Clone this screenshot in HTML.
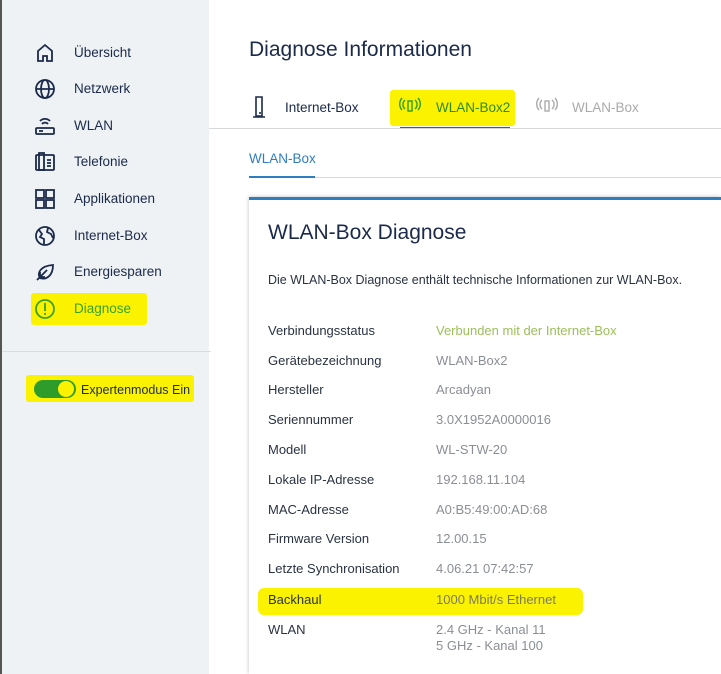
<!DOCTYPE html>
<html style="overflow:hidden;width:721px;height:674px"><head><meta charset="utf-8"><style>
*{margin:0;padding:0;box-sizing:border-box}
body{width:721px;height:674px;overflow:hidden;background:#fff;font-family:"Liberation Sans",sans-serif;position:relative;color:#1b2a4a}
.side{position:absolute;left:0;top:0;width:209px;height:674px;background:#eef2f5;border-left:2px solid #555}
.item{position:absolute;left:72px;font-size:13.5px;color:#1b2a4a}
.ic{position:absolute;left:32px;width:22px;height:22px}
.hl{position:absolute;background:#fbf200;border-radius:3px}
.t{position:absolute;font-size:13px}
.l{left:268px;color:#2a3242}
.v{left:436px;color:#8a8f96}
</style></head><body>
<div class="side">
<div class="hl" style="left:29px;top:293px;width:116px;height:32px"></div>
<div class="hl" style="left:24px;top:375px;width:168px;height:27px"></div>
<svg class="ic" style="top:42px" viewBox="0 0 22 22" fill="none" stroke="#1b2a4a" stroke-width="1.8"><path d="M4 19V9l7-6 7 6v10h-5v-5h-4v5z"/></svg>
<div class="item" style="top:45px">Übersicht</div>
<svg class="ic" style="top:78px" viewBox="0 0 22 22" fill="none" stroke="#1b2a4a" stroke-width="1.8"><circle cx="11" cy="11" r="9"/><ellipse cx="11" cy="11" rx="4" ry="9"/><path d="M2 11h18"/></svg>
<div class="item" style="top:81px">Netzwerk</div>
<svg class="ic" style="top:115px" viewBox="0 0 22 22" fill="none" stroke="#1b2a4a" stroke-width="1.8"><path d="M6 6a7 7 0 0 1 10 0M8 9a4 4 0 0 1 6 0"/><rect x="2" y="13" width="18" height="6" rx="1"/><path d="M5 16h4"/></svg>
<div class="item" style="top:118px">WLAN</div>
<svg class="ic" style="top:151px" viewBox="0 0 22 22" fill="none" stroke="#1b2a4a" stroke-width="1.8"><rect x="2" y="4" width="18" height="15" rx="1"/><rect x="5" y="2" width="5" height="17"/><path d="M13 9h4M13 12h4M13 15h4"/></svg>
<div class="item" style="top:154px">Telefonie</div>
<svg class="ic" style="top:188px" viewBox="0 0 22 22" fill="none" stroke="#1b2a4a" stroke-width="1.8"><rect x="2" y="2" width="8" height="8"/><rect x="12" y="2" width="8" height="8"/><rect x="2" y="12" width="8" height="8"/><rect x="12" y="12" width="8" height="8"/></svg>
<div class="item" style="top:191px">Applikationen</div>
<svg class="ic" style="top:225px" viewBox="0 0 22 22" fill="none" stroke="#1b2a4a" stroke-width="1.8"><circle cx="11" cy="11" r="9"/><path d="M5 5l3 4-2 3 4 2v5M14 3l-1 4 4 2 2 4"/></svg>
<div class="item" style="top:228px">Internet-Box</div>
<svg class="ic" style="top:261px" viewBox="0 0 22 22" fill="none" stroke="#1b2a4a" stroke-width="1.8"><path d="M6 17c-3-5 0-12 13-13 0 12-8 15-13 13zM3 19l10-10M6 16h5M6 16v-5"/></svg>
<div class="item" style="top:264px">Energiesparen</div>
<svg class="ic" style="top:298px" viewBox="0 0 22 22" fill="none" stroke="#3aa128" stroke-width="1.8"><circle cx="11" cy="11" r="9"/><path d="M11 5v8M11 15v2"/></svg>
<div class="item" style="top:301px;color:#3aa128">Diagnose</div>
<div style="position:absolute;left:0;top:351px;width:209px;height:1px;background:#d8dde2"></div>
<div style="position:absolute;left:32px;top:380px;width:42px;height:18px;border-radius:9px;background:#2e9c2a"></div>
<div style="position:absolute;left:56px;top:381px;width:16px;height:16px;border-radius:8px;background:#fbf200"></div>
<div class="item" style="left:79px;top:383px;font-size:12.5px;color:#1b2a4a">Expertenmodus Ein</div>
</div>
<div style="position:absolute;left:249px;top:38px;font-size:21px;color:#1b2a4a">Diagnose Informationen</div>
<div class="hl" style="left:390px;top:90px;width:125px;height:36px"></div>
<svg style="position:absolute;left:252px;top:96px" width="14" height="22" viewBox="0 0 14 22" fill="none" stroke="#1b2a4a" stroke-width="1.6"><path d="M4 1h6v19H4zM1 21h12M8 16v2"/></svg>
<div class="t" style="left:285px;top:100px;font-size:13.5px;color:#1b2a4a">Internet-Box</div>
<svg style="position:absolute;left:399px;top:97px" width="22" height="16" viewBox="0 0 22 16" fill="none" stroke="#2e9c2a" stroke-width="1.4"><rect x="9" y="4" width="4" height="10"/><path d="M6 3a6 6 0 0 0 0 9M16 3a6 6 0 0 1 0 9M3 1a9 9 0 0 0 0 12M19 1a9 9 0 0 1 0 12"/></svg>
<div class="t" style="left:436px;top:100px;font-size:13.5px;color:#2e8a24">WLAN-Box2</div>
<div style="position:absolute;left:400px;top:127px;width:110px;height:2px;background:#2e6a70"></div>
<svg style="position:absolute;left:536px;top:97px" width="22" height="16" viewBox="0 0 22 16" fill="none" stroke="#aaa" stroke-width="1.4"><rect x="9" y="4" width="4" height="10"/><path d="M6 3a6 6 0 0 0 0 9M16 3a6 6 0 0 1 0 9M3 1a9 9 0 0 0 0 12M19 1a9 9 0 0 1 0 12"/></svg>
<div class="t" style="left:572px;top:100px;font-size:13.5px;color:#aaa">WLAN-Box</div>
<div style="position:absolute;left:209px;top:128px;width:512px;height:1px;background:#d5d8dc"></div>
<div class="t" style="left:249px;top:151px;font-size:13.5px;color:#2f7dc1">WLAN-Box</div>
<div style="position:absolute;left:249px;top:177px;width:472px;height:1px;background:#d5d8dc"></div>
<div style="position:absolute;left:249px;top:176px;width:66px;height:2px;background:#2f7dc1"></div>
<div style="position:absolute;left:249px;top:197px;width:472px;height:477px;border-top:3px solid #2f7dc1;box-shadow:0 0 4px rgba(0,0,0,.25);background:#fff"></div>
<div class="t" style="left:268px;top:221px;font-size:21px;color:#1b2a4a">WLAN-Box Diagnose</div>
<div class="t" style="left:268px;top:273px;font-size:12.5px;color:#2a3242">Die WLAN-Box Diagnose enthält technische Informationen zur WLAN-Box.</div>
<div class="hl" style="left:258px;top:588px;width:325px;height:27px;border-radius:6px"></div>
<div class="t l" style="top:323px">Verbindungsstatus</div><div class="t v" style="top:323px;color:#9cbf5a">Verbunden mit der Internet-Box</div>
<div class="t l" style="top:353px">Gerätebezeichnung</div><div class="t v" style="top:353px">WLAN-Box2</div>
<div class="t l" style="top:382px">Hersteller</div><div class="t v" style="top:382px">Arcadyan</div>
<div class="t l" style="top:412px">Seriennummer</div><div class="t v" style="top:412px">3.0X1952A0000016</div>
<div class="t l" style="top:442px">Modell</div><div class="t v" style="top:442px">WL-STW-20</div>
<div class="t l" style="top:472px">Lokale IP-Adresse</div><div class="t v" style="top:472px">192.168.11.104</div>
<div class="t l" style="top:502px">MAC-Adresse</div><div class="t v" style="top:502px">A0:B5:49:00:AD:68</div>
<div class="t l" style="top:531px">Firmware Version</div><div class="t v" style="top:531px">12.00.15</div>
<div class="t l" style="top:561px">Letzte Synchronisation</div><div class="t v" style="top:561px">4.06.21 07:42:57</div>
<div class="t l" style="top:592px">Backhaul</div><div class="t v" style="top:592px;color:#7a7a60">1000 Mbit/s Ethernet</div>
<div class="t l" style="top:622px">WLAN</div><div class="t v" style="top:622px;line-height:16px">2.4 GHz - Kanal 11<br>5 GHz - Kanal 100</div>
</body></html>
